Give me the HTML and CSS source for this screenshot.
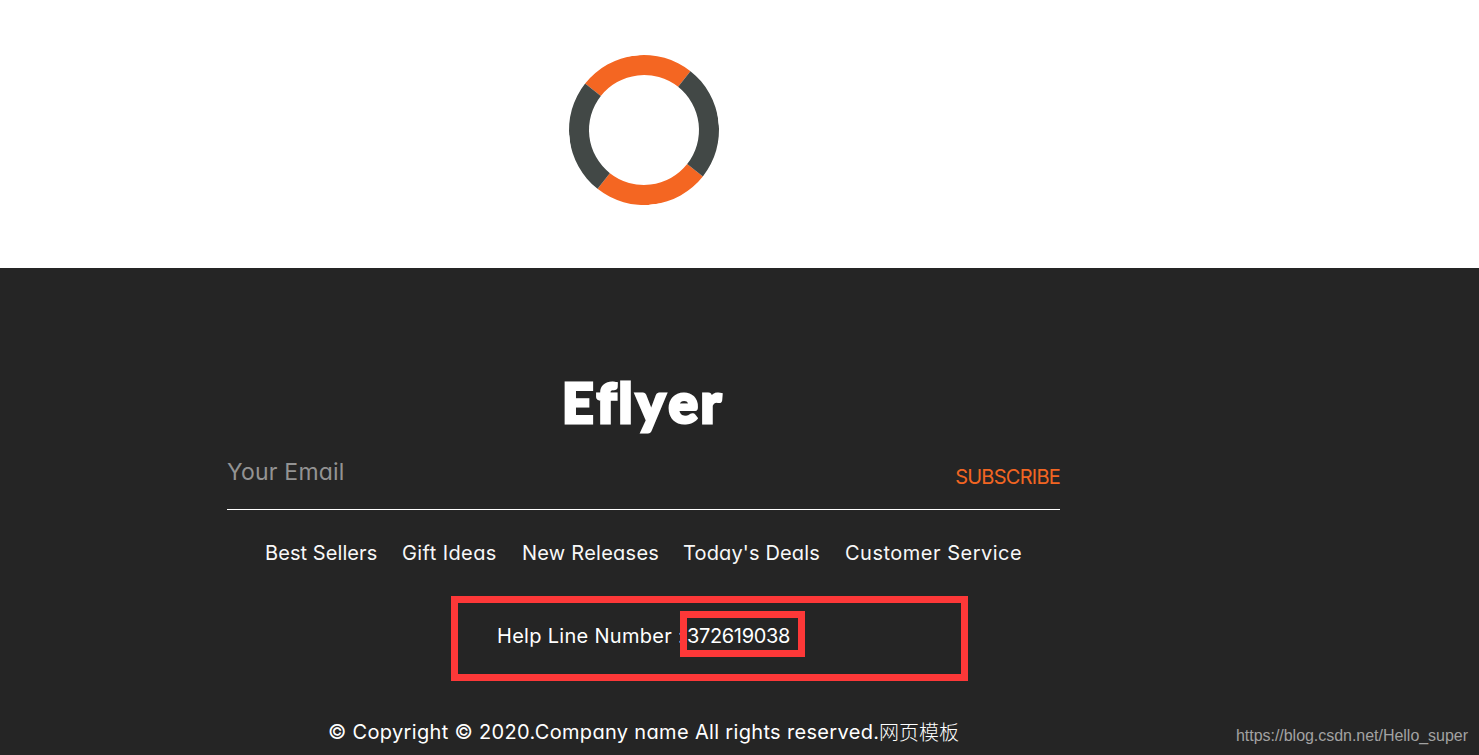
FILE: index.html
```
<!DOCTYPE html>
<html lang="en">
<head>
<meta charset="utf-8">
<title>Eflyer</title>
<link rel="stylesheet" href="styles.css">
</head>
<body>
<section class="loader-section"><div class="loader"></div></section>
<footer class="footer">
  <div class="content">
    <svg class="logo" width="162" height="56" viewBox="0 0 162 56" role="img" aria-label="Eflyer">
      <text class="logo-text" x="-2 32.5 54.5 72 104.5 136.5" y="45">Eflyer</text>
    </svg>
    <div class="subscribe">
      <span class="email">Your Email</span>
      <a class="subscribe-link">SUBSCRIBE</a>
    </div>
    <nav class="links">
      <a class="l1">Best Sellers</a><a class="l2">Gift Ideas</a><a class="l3">New Releases</a><a class="l4">Today's Deals</a><a class="l5">Customer Service</a>
    </nav>
    <p class="help"><span class="help-label">Help Line Number :</span><span class="phone">372619038</span></p>
    <p class="copyright"><span class="copy-text">© Copyright © 2020.Company name All rights reserved.</span><span class="cjk">网页模板</span></p>
  </div>
  <div class="mark mark-line"></div>
  <div class="mark mark-number"></div>
  <span class="watermark">https://blog.csdn.net/Hello_super</span>
</footer>
</body>
</html>
```
FILE: styles.css
```
* { box-sizing: border-box; }
body { margin: 0; height: 755px; overflow: hidden; background: #fff; font-family: Inter, "Noto Sans CJK SC", sans-serif; font-feature-settings: "cv11"; }
.loader-section { height: 268px; width: 1288px; padding-top: 55px; display: flex; justify-content: center; align-items: flex-start; }
.loader { width: 150px; height: 150px; border-radius: 50%; border: 20px solid #424846; border-top-color: #f46622; border-bottom-color: #f46622; transform: rotate(-6.7deg); }
.footer { position: relative; height: 487px; background: #252525; color: #fff; }
.content { width: 833px; margin-left: 227px; padding-top: 110px; display: flex; flex-direction: column; }
.logo { display: block; margin-left: 337px; overflow: visible; }
.logo-text { font-family: Lato, sans-serif; font-weight: 900; font-size: 55px; font-variant-ligatures: none; fill: #fff; stroke: #fff; stroke-width: 3px; }
.subscribe { height: 76px; border-bottom: 1px solid #fff; display: flex; justify-content: space-between; white-space: nowrap; }
.email { padding-top: 23px; font-size: 23px; line-height: 30px; letter-spacing: 0.2px; color: #939393; }
.subscribe-link { padding-top: 28px; font-size: 20px; line-height: 30px; letter-spacing: -0.75px; color: #f26522; }
.links { display: flex; margin-left: 38px; padding-top: 28px; gap: 25px; font-size: 20px; line-height: 30px; white-space: nowrap; color: #f8f8f8; }
.l1 { width: 112px; letter-spacing: 0.08px; }
.l2 { width: 95px; letter-spacing: 0.4px; }
.l3 { width: 136px; letter-spacing: 0.25px; }
.l4 { width: 137px; letter-spacing: 0.15px; }
.l5 { width: 177px; letter-spacing: 0.5px; }
.help { margin: 53px 0 0 270px; display: flex; font-size: 20px; line-height: 30px; white-space: nowrap; }
.help-label { width: 190px; letter-spacing: 0.3px; }
.phone { letter-spacing: -0.35px; }
.copyright { margin: 66px 0 0 101px; display: flex; font-size: 20px; line-height: 30px; white-space: nowrap; }
.copy-text { width: 551px; letter-spacing: 0.33px; }
.cjk { font-family: "Noto Sans CJK SC", sans-serif; font-weight: 300; }
.mark { position: absolute; border: 7px solid #fd3838; }
.mark-line { left: 451px; top: 328px; width: 517px; height: 85px; }
.mark-number { left: 680px; top: 343px; width: 125px; height: 46px; }
.watermark { position: absolute; right: 11px; bottom: 9px; font-family: "Liberation Sans", Arial, sans-serif; font-size: 16px; line-height: 20px; letter-spacing: -0.03px; color: #a2a2a2; }
```
